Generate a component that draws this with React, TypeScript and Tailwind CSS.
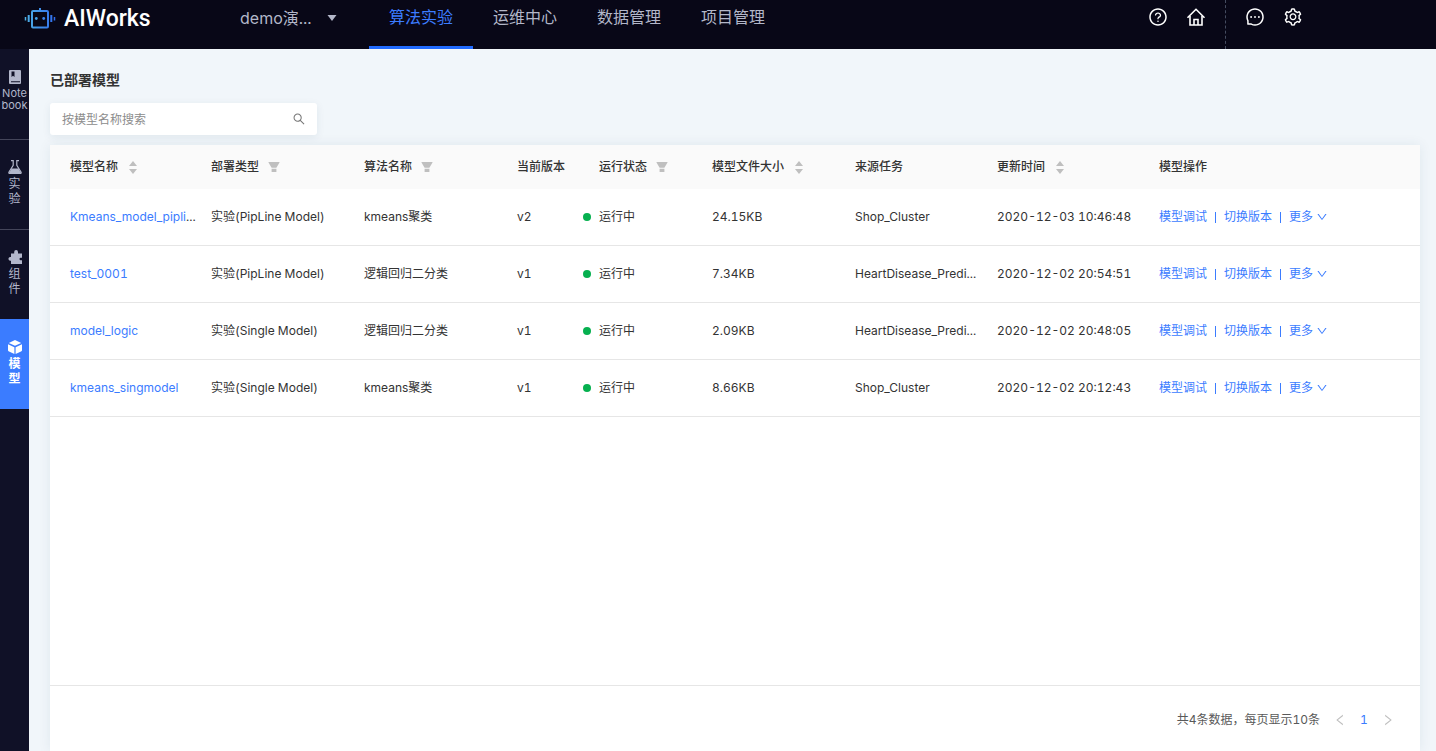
import type { ReactNode } from "react";
import { clsx } from "clsx";
import {
  AiOutlineDown,
  AiOutlineLeft,
  AiOutlineMessage,
  AiOutlineQuestionCircle,
  AiOutlineRight,
  AiOutlineSearch,
  AiOutlineSetting,
} from "react-icons/ai";

type Model = {
  name: string;
  clipped?: boolean;
  type: string;
  algorithm: string;
  version: string;
  size: string;
  source: string;
  updatedAt: string;
};

const MODELS: Model[] = [
  {
    name: "Kmeans_model_pipli",
    clipped: true,
    type: "实验(PipLine Model)",
    algorithm: "kmeans聚类",
    version: "v2",
    size: "24.15KB",
    source: "Shop_Cluster",
    updatedAt: "2020-12-03 10:46:48",
  },
  {
    name: "test_0001",
    type: "实验(PipLine Model)",
    algorithm: "逻辑回归二分类",
    version: "v1",
    size: "7.34KB",
    source: "HeartDisease_Predi...",
    updatedAt: "2020-12-02 20:54:51",
  },
  {
    name: "model_logic",
    type: "实验(Single Model)",
    algorithm: "逻辑回归二分类",
    version: "v1",
    size: "2.09KB",
    source: "HeartDisease_Predi...",
    updatedAt: "2020-12-02 20:48:05",
  },
  {
    name: "kmeans_singmodel",
    type: "实验(Single Model)",
    algorithm: "kmeans聚类",
    version: "v1",
    size: "8.66KB",
    source: "Shop_Cluster",
    updatedAt: "2020-12-02 20:12:43",
  },
];

const NAV = ["算法实验", "运维中心", "数据管理", "项目管理"];

const COLUMNS: { label: string; width: string; tool?: "sort" | "filter" }[] = [
  { label: "模型名称", width: "w-[145px]", tool: "sort" },
  { label: "部署类型", width: "w-[153px]", tool: "filter" },
  { label: "算法名称", width: "w-[153px]", tool: "filter" },
  { label: "当前版本", width: "w-[82px]" },
  { label: "运行状态", width: "w-[113px]", tool: "filter" },
  { label: "模型文件大小", width: "w-[143px]", tool: "sort" },
  { label: "来源任务", width: "w-[142px]" },
  { label: "更新时间", width: "w-[162px]", tool: "sort" },
  { label: "模型操作", width: "w-auto" },
];

function LogoIcon() {
  return (
    <svg width="32" height="22" viewBox="0 0 32 22" fill="none" strokeWidth="2" aria-hidden="true">
      <defs>
        <linearGradient id="logo" gradientUnits="userSpaceOnUse" x1="0" y1="0" x2="32" y2="0">
          <stop offset="0" stopColor="#4fb4e6" />
          <stop offset="1" stopColor="#2f6bf0" />
        </linearGradient>
      </defs>
      <g stroke="url(#logo)">
        <rect x="8" y="4" width="16" height="16.500" rx="1" />
        <path d="M16 1v3M4.700 8v7M27.300 8v7" />
        <path d="M1.500 10v3.500M30.500 10v3.500" strokeWidth="1.500" />
      </g>
      <circle cx="12.300" cy="11.500" r="1.400" fill="#46a0ea" />
      <circle cx="19.700" cy="11.500" r="1.400" fill="#3c86ee" />
    </svg>
  );
}

function HomeIcon() {
  return (
    <svg width="20" height="20" viewBox="0 0 20 20" fill="none" stroke="currentColor" strokeWidth="1.600" aria-hidden="true">
      <path d="M1.500 10.800 10 2.300l8.500 8.500" />
      <path d="M4 9v9h12V9M8 18v-5.500h4V18" />
    </svg>
  );
}

function NotebookIcon() {
  return (
    <svg width="14" height="14" viewBox="0 0 14 14" fill="currentColor" aria-hidden="true">
      <path
        fillRule="evenodd"
        d="M2 0h10a1 1 0 0 1 1 1v12a1 1 0 0 1-1 1H2a1 1 0 0 1-1-1V1a1 1 0 0 1 1-1Zm1.500 1.500V7L5 5.700 6.500 7V1.500Zm-.5 9.800v1h9v-1Z"
      />
    </svg>
  );
}

function FlaskIcon() {
  return (
    <svg width="14" height="14" viewBox="0 0 14 14" aria-hidden="true">
      <path
        d="M3 .7h2.200v4.600L.9 12.200q-.3 1.100.8 1.100h10.600q1.100 0 .8-1.100L8.800 5.300V.7H11"
        fill="none"
        stroke="currentColor"
        strokeWidth="1.200"
      />
      <path d="M3.600 8.600h6.800l2.800 4.900H.8Z" fill="currentColor" />
    </svg>
  );
}

function PuzzleIcon() {
  return (
    <svg width="14" height="14" viewBox="0 0 14 14" fill="currentColor" aria-hidden="true">
      <path d="M3 3.500h3.200V2a1.900 1.900 0 0 1 3.800 0v1.500h4v4.300h-1.300a1.200 1.200 0 0 0 0 2.400H14V14H3v-3.300H1.900a1.900 1.900 0 0 1 0-3.700H3Z" />
    </svg>
  );
}

function CubeIcon() {
  return (
    <svg width="14" height="14" viewBox="0 0 14 14" fill="currentColor" aria-hidden="true">
      <path d="M7 0 13.200 2.900 7 5.800.8 2.900ZM0 4.300l6.400 2.900V14L1 11.600Q0 11.100 0 10.200ZM14 4.300 7.600 7.200V14l5.400-2.400q1-.5 1-1.400Z" />
    </svg>
  );
}

function SortIcon() {
  return (
    <svg width="8" height="13" viewBox="0 0 8 13" fill="#bfbfbf" aria-hidden="true">
      <path d="M4 0 8 5H0ZM4 13 0 8h8Z" />
    </svg>
  );
}

function FilterIcon() {
  return (
    <svg width="12" height="12" viewBox="0 0 12 12" fill="#bfbfbf" aria-hidden="true">
      <path d="M.7 1h10.600q.5 0 .2.500L8.400 6.800H3.600L.5 1.500Q.2 1 .7 1ZM3.600 7.800h4.800v3.200H3.600Z" />
    </svg>
  );
}

function Header() {
  return (
    <header className="flex h-[49px] items-start bg-[#080717] text-[#b3b7c9]">
      <a href="#home" className="flex h-9 items-center gap-2 pl-6 text-white">
        <LogoIcon />
        <span className="w-[100px] pt-0.5 font-[Roboto] text-[23px]/[32px] font-medium">AIWorks</span>
      </a>
      <button type="button" className="ml-[76px] flex h-9 w-[129px] items-center text-base">
        <span className="w-[87px] text-left">demo演...</span>
        <svg width="10" height="6" viewBox="0 0 10 6" fill="currentColor" aria-hidden="true">
          <path d="M.5 0h9L5 6Z" />
        </svg>
      </button>
      <nav className="flex h-full">
        {NAV.map((label, i) => (
          <a
            key={label}
            href="#nav"
            className={clsx(
              "h-full w-[104px] border-b-3 text-center text-base leading-[34px]",
              i === 0 ? "border-[#216bff] text-[#3c7cff]" : "border-transparent",
            )}
          >
            {label}
          </a>
        ))}
      </nav>
      <div className="ml-auto flex h-full pr-[133px] text-white">
        <div className="flex h-[34px] items-center gap-[18px] pr-[19px]">
          <button type="button" aria-label="帮助">
            <AiOutlineQuestionCircle size={20} />
          </button>
          <button type="button" aria-label="首页">
            <HomeIcon />
          </button>
        </div>
        <div className="h-full border-l border-dashed border-[#454c60]" />
        <div className="flex h-[34px] items-center gap-[18px] pl-[19px]">
          <button type="button" aria-label="消息">
            <AiOutlineMessage size={20} />
          </button>
          <button type="button" aria-label="设置">
            <AiOutlineSetting size={20} />
          </button>
        </div>
      </div>
    </header>
  );
}

function SideItem({ icon, lines, active }: { icon: ReactNode; lines: string[]; active?: boolean }) {
  return (
    <a
      href="#side"
      className={clsx(
        "flex h-[90px] flex-col items-center gap-0.5 border-t pt-5 text-xs leading-[15px]",
        active
          ? "border-[#3b7cff] bg-[#3b7cff] font-bold text-white"
          : "border-[#44455a] text-[#b3b7cb] first:gap-[3px] first:border-transparent first:text-[11px] first:leading-3",
      )}
    >
      {icon}
      <span className="flex flex-col items-center">
        {lines.map((line) => (
          <span key={line}>{line}</span>
        ))}
      </span>
    </a>
  );
}

function Actions() {
  return (
    <div className="flex items-center text-[#3b7cff]">
      <button type="button">模型调试</button>
      <span className="mx-2 h-[11px] w-px bg-[#3b7cff]" />
      <button type="button">切换版本</button>
      <span className="mx-2 h-[11px] w-px bg-[#3b7cff]" />
      <button type="button" className="flex items-center gap-[3px]">
        更多
        <AiOutlineDown size={12} />
      </button>
    </div>
  );
}

function ModelTable() {
  return (
    <table className="w-full table-fixed border-separate border-spacing-0 text-left whitespace-nowrap">
      <thead>
        <tr className="h-11 bg-[#fafafa]">
          {COLUMNS.map(({ label, width, tool }) => (
            <th key={label} className={clsx("pl-4 font-medium first:pl-5", width)}>
              <span className="flex items-center gap-2">
                {label}
                {tool ? (
                  <button type="button" aria-label={tool === "sort" ? "排序" : "筛选"} className="flex w-[14px] justify-center">
                    {tool === "sort" ? <SortIcon /> : <FilterIcon />}
                  </button>
                ) : null}
              </span>
            </th>
          ))}
        </tr>
      </thead>
      <tbody className="[&_td]:h-[57px] [&_td]:border-b [&_td]:border-[#e6e6e6]">
        {MODELS.map((m) => (
          <tr key={m.name}>
            <td className="pl-5">
              <a href="#model" className="text-[#3b7cff]">
                {m.name}
              </a>
              {m.clipped ? "..." : null}
            </td>
            <td className="pl-4">{m.type}</td>
            <td className="pl-4">{m.algorithm}</td>
            <td className="pl-4">{m.version}</td>
            <td>
              <span className="flex items-center gap-2">
                <span className="size-2 rounded-full bg-[#06b04f]" />
                运行中
              </span>
            </td>
            <td className="pl-4">{m.size}</td>
            <td className="pl-4">{m.source}</td>
            <td className="pl-4">{m.updatedAt}</td>
            <td className="pl-4">
              <Actions />
            </td>
          </tr>
        ))}
      </tbody>
    </table>
  );
}

export default function App() {
  return (
    <div className="flex min-h-screen flex-col bg-[#f1f6fa] font-[Inter,'Noto_Sans_CJK_SC',sans-serif] text-xs text-[#333] tabular-nums">
      <Header />
      <div className="flex flex-1">
        <aside className="w-[29px] shrink-0 bg-[#101127]">
          <SideItem icon={<NotebookIcon />} lines={["Note", "book"]} />
          <SideItem icon={<FlaskIcon />} lines={["实", "验"]} />
          <SideItem icon={<PuzzleIcon />} lines={["组", "件"]} />
          <SideItem icon={<CubeIcon />} lines={["模", "型"]} active />
        </aside>
        <main className="flex min-w-0 flex-1 flex-col pt-5 pr-4 pl-[21px]">
          <h1 className="text-sm leading-[22px] font-bold">已部署模型</h1>
          <label className="mt-3 flex h-8 w-[267px] items-center rounded-[3px] bg-white pr-[11px] pl-3 shadow-[0_2px_8px_rgba(30,60,90,0.08)]">
            <input
              type="text"
              aria-label="按模型名称搜索"
              placeholder="按模型名称搜索"
              className="h-full min-w-0 flex-1 pt-px outline-none placeholder:text-[#8c8c8c]"
            />
            <AiOutlineSearch size={14} className="text-[#777]" />
          </label>
          <section className="mt-2.5 flex flex-1 flex-col bg-white shadow-[0_0_12px_rgba(30,60,90,0.08)]">
            <div className="flex-1">
              <ModelTable />
            </div>
            <footer className="flex h-[66px] items-start justify-end border-t border-[#e6e6e6] pt-[22px] pr-5 leading-6 text-[#595959]">
              <span className="pr-2">共4条数据，每页显示10条</span>
              <button type="button" aria-label="上一页" className="flex size-6 items-center justify-center text-[#bfbfbf]">
                <AiOutlineLeft size={14} />
              </button>
              <button type="button" className="size-6 text-[#3b7cff]">
                1
              </button>
              <button type="button" aria-label="下一页" className="flex size-6 items-center justify-center text-[#bfbfbf]">
                <AiOutlineRight size={14} />
              </button>
            </footer>
          </section>
        </main>
      </div>
    </div>
  );
}
